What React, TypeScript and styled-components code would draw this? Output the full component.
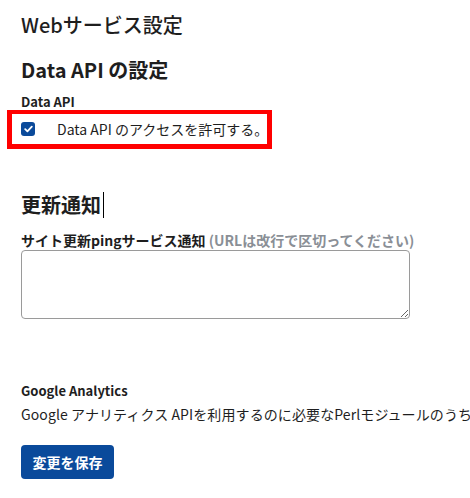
import React from 'react'
import styled, { createGlobalStyle } from 'styled-components'

const GlobalStyle = createGlobalStyle`
  html, body {
    margin: 0;
    padding: 0;
    background: #fff;
    overflow: hidden;
  }
  body {
    font-family: "Noto Sans CJK JP", "Noto Sans", sans-serif;
    color: #1e1e1e;
  }
`

const Page = styled.div`
  width: 470px;
  height: 498px;
  overflow: hidden;
  padding: 11px 0 0 21px;
  box-sizing: border-box;
`

const PageTitle = styled.h1`
  font-size: 20px;
  font-weight: 500;
  line-height: 28px;
  margin: 0;
`

const SectionTitle = styled.h2<{ $top: number }>`
  font-size: 20px;
  font-weight: 700;
  line-height: 28px;
  margin: ${(p) => p.$top}px 0 0;
  display: flex;
  align-items: center;
`

const Caret = styled.span`
  display: inline-block;
  width: 1px;
  height: 26px;
  background: #000;
  margin-left: 2px;
`

const FieldLabel = styled.div<{ $top: number; $size?: number }>`
  font-size: ${(p) => p.$size ?? 13}px;
  font-weight: 700;
  line-height: 16px;
  margin-top: ${(p) => p.$top}px;
  white-space: nowrap;
`

const Hint = styled.span`
  color: #8a8f96;
  font-weight: 700;
`

const Highlight = styled.div`
  margin: 0 0 0 -14px;
  width: 265px;
  height: 39px;
  box-sizing: border-box;
  border: 5px solid #ff0000;
  border-top-width: 4px;
  display: flex;
  align-items: center;
  padding-left: 9px;
`

const Check = styled.span`
  flex: none;
  width: 14px;
  height: 14px;
  border-radius: 3px;
  background: #0b4a9a;
  display: flex;
  align-items: center;
  justify-content: center;
`

const CheckText = styled.span`
  font-size: 14px;
  margin-left: 22px;
  color: #1e1e1e;
  white-space: nowrap;
`

const TextBox = styled.textarea`
  display: block;
  width: 389px;
  height: 69px;
  box-sizing: border-box;
  margin-top: 2px;
  border: 1px solid #9a9a9a;
  border-radius: 4px;
  font-family: inherit;
`

const Description = styled.div`
  font-size: 14px;
  line-height: 20px;
  margin-top: 5px;
  white-space: nowrap;
  letter-spacing: 0.1px;
`

const SaveButton = styled.button`
  margin-top: 21px;
  width: 93px;
  height: 34px;
  border: none;
  border-radius: 4px;
  background: #0a4a9b;
  color: #fff;
  font-family: inherit;
  font-size: 14px;
  font-weight: 700;
  padding: 0;
`

export default function App() {
  return (
    <Page>
      <GlobalStyle />
      <PageTitle>Webサービス設定</PageTitle>
      <SectionTitle $top={17}>Data API の設定</SectionTitle>
      <FieldLabel $top={10}>Data API</FieldLabel>
      <Highlight>
        <Check>
          <svg width="9" height="8" viewBox="0 0 9 8">
            <path d="M1.2 4.2 L3.4 6.3 L7.8 1.6" stroke="#fff" strokeWidth="1.8" fill="none" strokeLinecap="round" strokeLinejoin="round" />
          </svg>
        </Check>
        <CheckText>Data API のアクセスを許可する。</CheckText>
      </Highlight>
      <SectionTitle $top={42}>
        更新通知<Caret />
      </SectionTitle>
      <FieldLabel $top={13} $size={14}>
        サイト更新pingサービス通知 <Hint>(URLは改行で区切ってください)</Hint>
      </FieldLabel>
      <TextBox />
      <FieldLabel $top={64}>Google Analytics</FieldLabel>
      <Description>
        Google アナリティクス APIを利用するのに必要なPerlモジュールのうち以下がインストールされていません。
      </Description>
      <SaveButton>変更を保存</SaveButton>
    </Page>
  )
}
